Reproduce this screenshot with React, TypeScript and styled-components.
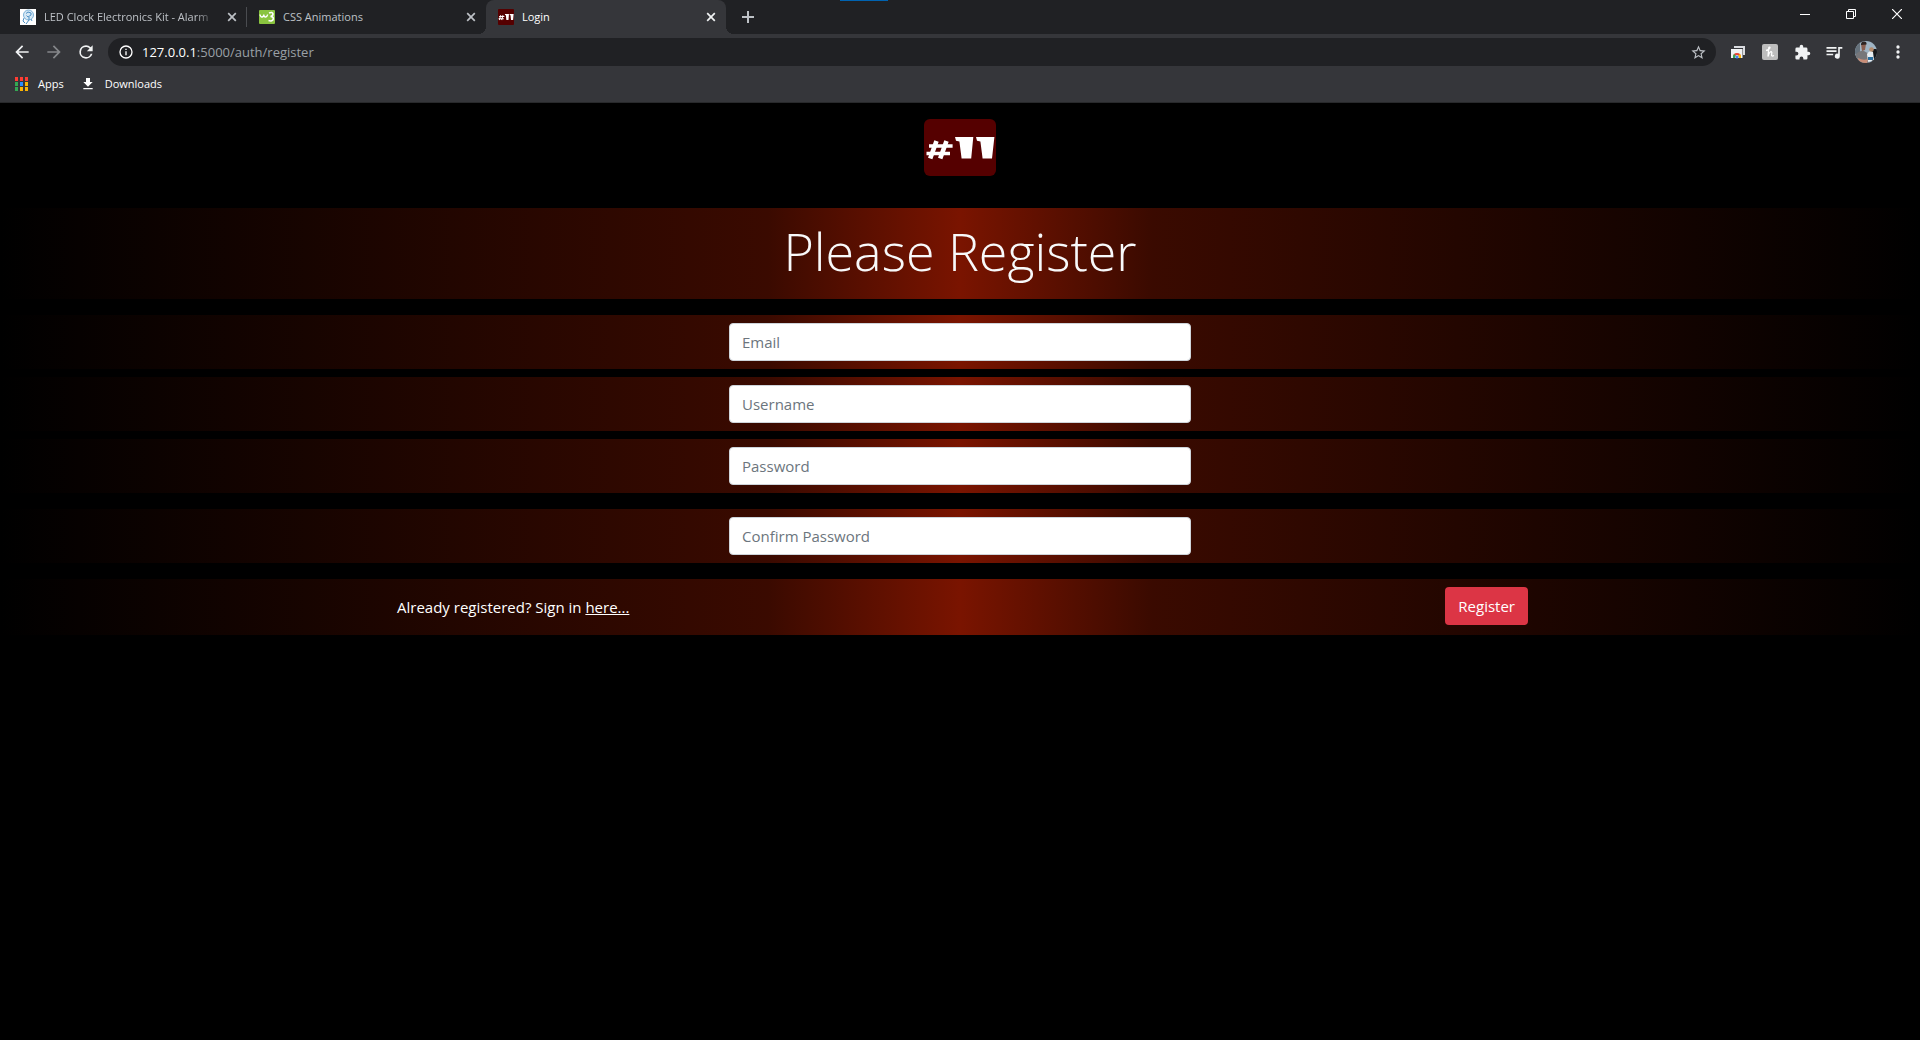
import React from "react";
import styled, { createGlobalStyle, css } from "styled-components";

const uiFont = `"Segoe UI", "Open Sans", "Noto Sans", sans-serif`;

const GlobalStyle = createGlobalStyle`
  *, *::before, *::after { box-sizing: border-box; }
  html, body { margin: 0; background: #000; }
  body { font-family: ${uiFont}; font-size: 15px; line-height: 24px; color: #fff; }
  button, input { font-family: inherit; }
`;

const Screen = styled.div`
  display: flex;
  flex-direction: column;
  min-height: 100vh;
  background: #000;
`;

/* ---------- browser chrome ---------- */

const Chrome = styled.header`
  background: #35363a;
  border-bottom: 1px solid #28292b;
  font-size: 11px;
  line-height: 16px;
`;

const TabStrip = styled.div`
  position: relative;
  display: flex;
  align-items: stretch;
  height: 34px;
  padding-left: 8px;
  background: #202124;
`;

const Accent = styled.span`
  position: absolute;
  top: 0;
  left: 840px;
  width: 48px;
  height: 1px;
  background: #0063b1;
`;

const Tab = styled.div<{ $active?: boolean; $divider?: boolean }>`
  position: relative;
  display: flex;
  align-items: center;
  gap: 8px;
  width: 239px;
  padding: 0 7px 0 12px;
  color: #bdc1c6;
  ${(p) =>
    p.$divider &&
    css`
      &::after {
        content: "";
        position: absolute;
        right: 0;
        top: 7px;
        width: 1px;
        height: 20px;
        background: #4a4c50;
      }
    `}
  ${(p) =>
    p.$active &&
    css`
      width: 240px;
      color: #fff;
      background: #35363a;
      border-radius: 8px 8px 0 0;
      &::before,
      &::after {
        content: "";
        position: absolute;
        bottom: 0;
        width: 8px;
        height: 8px;
      }
      &::before {
        left: -8px;
        background: radial-gradient(circle at 0 0, transparent 8px, #35363a 8px);
      }
      &::after {
        right: -8px;
        background: radial-gradient(circle at 100% 0, transparent 8px, #35363a 8px);
      }
    `}
`;

const TabTitle = styled.span<{ $fade?: boolean }>`
  flex: 1;
  min-width: 0;
  overflow: hidden;
  white-space: nowrap;
  ${(p) =>
    p.$fade &&
    css`
      mask-image: linear-gradient(90deg, #000 88%, transparent);
    `}
`;

const IconButton = styled.button<{ $w?: number; $h?: number; $color?: string }>`
  display: inline-flex;
  align-items: center;
  justify-content: center;
  flex: none;
  width: ${(p) => p.$w ?? 32}px;
  height: ${(p) => p.$h ?? 28}px;
  padding: 0;
  border: 0;
  background: none;
  color: ${(p) => p.$color ?? "#f1f3f4"};
  cursor: pointer;
`;

const NewTab = styled(IconButton)`
  margin: 3px 0 0 7px;
`;

const WindowControls = styled.div`
  display: flex;
  margin-left: auto;
`;

const Toolbar = styled.div`
  display: flex;
  align-items: center;
  height: 36px;
  padding: 0 6px;
`;

const AddressBar = styled.div`
  display: flex;
  align-items: center;
  flex: 1;
  height: 28px;
  margin: 0 6px;
  padding: 0 4px 0 10px;
  border-radius: 14px;
  background: #202124;
`;

const Address = styled.div`
  flex: 1;
  margin-left: 8px;
  font-size: 13px;
  line-height: 20px;
  color: #9aa0a6;

  b {
    font-weight: 400;
    color: #fff;
  }
`;

const Bookmarks = styled.nav`
  display: flex;
  align-items: center;
  gap: 16px;
  height: 32px;
  padding: 0 15px 4px;
`;

const Bookmark = styled.a`
  display: flex;
  align-items: center;
  gap: 9px;
  color: #fff;
  text-decoration: none;
`;

/* ---------- page ---------- */

const Page = styled.main`
  display: flex;
  flex-direction: column;
  align-items: center;
  padding-top: 16px;
`;

const LogoLink = styled.a`
  display: block;
  height: 57px;
  margin-bottom: 32px;
`;

const Form = styled.form`
  width: 100%;
`;

const Band = styled.div<{ $gap?: number }>`
  display: flex;
  justify-content: center;
  margin-bottom: ${(p) => p.$gap ?? 16}px;
  padding: 8px 0;
  background: linear-gradient(
    90deg,
    #000 0%,
    #3a0a00 40%,
    #7a1400 50%,
    #3a0a00 60%,
    #000 100%
  );
`;

const Title = styled.h1`
  margin: 0;
  padding-bottom: 5px;
  font-size: 52px;
  font-weight: 300;
  line-height: 70px;
  color: #f8f9fa;
`;

const Field = styled.div`
  width: calc(25% - 18px);
`;

const TextInput = styled.input`
  display: block;
  width: 100%;
  height: 38px;
  padding: 6px 12px;
  border: 1px solid #ced4da;
  border-radius: 4px;
  background: #fff;
  color: #495057;
  font-size: 15px;
  line-height: 24px;

  &::placeholder {
    color: #6c757d;
    opacity: 1;
  }
`;

const Actions = styled.div`
  display: flex;
  align-items: center;
  justify-content: space-between;
  width: 60%;
  height: 40px;
  padding: 0 8px 0 13px;
`;

const Prompt = styled.p`
  margin: 0;

  a {
    color: #fff;
    text-decoration: underline;
  }
`;

const Submit = styled.button`
  align-self: flex-start;
  height: 38px;
  padding: 0 13px;
  border: 0;
  border-radius: 4px;
  background: #dc3545;
  color: #fff;
  font-size: 15px;
  line-height: 24px;
  cursor: pointer;
`;

/* ---------- drawings ---------- */

const Badge = ({ w, h, r }: { w: number; h: number; r: number }) => (
  <svg width={w} height={h} viewBox="0 0 72 57" preserveAspectRatio="none" aria-hidden="true">
    <rect width="72" height="57" rx={r} fill="#550000" />
    <g stroke="#fff" strokeWidth="3.6" fill="none">
      <path d="M12.5 22 6.200 39.500M22.500 22 16.200 39.500" strokeWidth="4.600" />
      <path d="M5 27H28.600M2.500 34.500H26" />
    </g>
    <path fill="#fff" d="M31 18H49.300L47.200 39.500H37.600L35.400 22.600L32 21.800Z" />
    <path fill="#fff" d="M52 18H70.400L68 39.500H58.600L56.400 22.600L53 21.800Z" />
  </svg>
);

const CloseGlyph = () => (
  <svg width="10" height="10" viewBox="0 0 10 10" stroke="currentColor" strokeWidth="1.700" aria-hidden="true">
    <path d="M1.200 1.200 8.800 8.800M8.800 1.200 1.200 8.800" />
  </svg>
);

const ClockFavicon = () => (
  <svg width="16" height="16" viewBox="0 0 16 16" fill="none" aria-hidden="true">
    <rect width="16" height="16" fill="#fff" />
    <circle cx="8.500" cy="6" r="5" fill="#d5e8f5" stroke="#7db2d8" />
    <path d="M6 4.500 8 3l3 1v2L8 8 6.500 6.500M9 8v3l-3 4M4 9l-1 3 2 2M11 10l1 2" stroke="#4d8fc4" />
  </svg>
);

const W3Favicon = () => (
  <svg width="16" height="16" viewBox="0 0 16 16" fill="none" aria-hidden="true">
    <rect width="16" height="14" y="1" rx="1" fill="#8ac43f" />
    <path d="M1 5.500Q1.500 8.300 3.200 8 4.800 7.500 4.800 5.500 5 8.300 6.800 8 8.300 7.500 8.600 5.500" stroke="#fff" strokeWidth="1.400" />
    <path d="M10 4Q13.500 2.600 14 5 14 7 11.500 7.500 14.500 7.500 14.300 10 13.500 12.800 9.500 11.600" stroke="#fff" strokeWidth="1.600" />
  </svg>
);

const material = {
  back: "M20 11H7.83l5.59-5.59L12 4l-8 8 8 8 1.41-1.41L7.83 13H20v-2z",
  forward: "M12 4l-1.41 1.41L16.17 11H4v2h12.17l-5.58 5.59L12 20l8-8z",
  reload:
    "M17.650 6.350A7.960 7.960 0 0 0 12 4a8 8 0 1 0 7.730 10h-2.080A6 6 0 1 1 12 6c1.660 0 3.140.690 4.220 1.780L13 11h7V4l-2.350 2.350z",
  info: "M11 7h2v2h-2zm0 4h2v6h-2zm1-9a10 10 0 1 0 0 20 10 10 0 0 0 0-20zm0 18a8 8 0 1 1 0-16 8 8 0 0 1 0 16z",
  star: "M22 9.240l-7.190-.620L12 2 9.190 8.630 2 9.240l5.460 4.730L5.820 21 12 17.270 18.180 21l-1.630-7.030L22 9.240zM12 15.400l-3.760 2.270 1-4.280-3.320-2.880 4.380-.380L12 6.100l1.710 4.040 4.380.380-3.320 2.880 1 4.280L12 15.400z",
  puzzle:
    "M20.500 11H19V7a2 2 0 0 0-2-2h-4V3.500a2.500 2.500 0 0 0-5 0V5H4a2 2 0 0 0-2 2v3.800h1.500a2.700 2.700 0 0 1 0 5.400H2V20a2 2 0 0 0 2 2h3.800v-1.500a2.700 2.700 0 0 1 5.400 0V22H17a2 2 0 0 0 2-2v-4h1.500a2.500 2.500 0 0 0 0-5z",
  queue:
    "M15 6H3v2h12V6zm0 4H3v2h12v-2zM3 16h8v-2H3v2zM17 6v8.180A3 3 0 1 0 19 17V8h3V6h-5z",
  more: "M12 8a2 2 0 1 0 0-4 2 2 0 0 0 0 4zm0 2a2 2 0 1 0 0 4 2 2 0 0 0 0-4zm0 6a2 2 0 1 0 0 4 2 2 0 0 0 0-4z",
  download: "M19 9h-4V3H9v6H5l7 7 7-7zM5 18v2h14v-2H5z",
};

const Glyph = ({ name, size = 18 }: { name: keyof typeof material; size?: number }) => (
  <svg width={size} height={size} viewBox="0 0 24 24" fill="currentColor" aria-hidden="true">
    <path d={material[name]} />
  </svg>
);

const AppsGlyph = () => {
  const colors = ["#ff3d33", "#ff3d33", "#ff3d33", "#34a853", "#2b8cff", "#fbb404", "#34a853", "#fbb404", "#fbb404"];
  return (
    <svg width="14" height="14" viewBox="0 0 14 14" aria-hidden="true">
      {colors.map((c, i) => (
        <rect key={i} x={(i % 3) * 5} y={Math.floor(i / 3) * 5} width="3" height="4" fill={c} />
      ))}
    </svg>
  );
};

const CastGlyph = () => (
  <svg width="16" height="16" viewBox="0 0 16 16" aria-hidden="true">
    <path d="M4 2h11v9h-2V4H4z" fill="#dadce0" />
    <rect x="1" y="5" width="11.500" height="9" fill="#f1f3f4" />
    <path d="M3 13a4 4 0 0 1 8 0H9a2 2 0 0 0-4 0z" fill="#ea4335" />
    <path d="M3 13c0-1.300.5-2.200 1.200-2.900L5.600 11.600 5 14H3z" fill="#34a853" />
    <path d="M11 13c0-1.300-.5-2.200-1.200-2.900L8.400 11.600 9 14h2z" fill="#fbbc04" />
    <circle cx="7" cy="13" r="1.600" fill="#4285f4" />
  </svg>
);

const HoneyGlyph = () => (
  <svg width="16" height="16" viewBox="0 0 16 16" fill="none" aria-hidden="true">
    <rect width="16" height="16" rx="2" fill="#bdbdbd" />
    <path d="M4 6.500Q8 5.500 8 3.300 6.800 2.300 6.600 5L6 12.500Q7.500 7.500 9.300 7.600 10.300 8 9.600 10.500 9.300 13 12 11.500" stroke="#fff" strokeWidth="1.300" />
  </svg>
);

const Avatar = () => (
  <svg width="22" height="22" viewBox="0 0 22 22" aria-hidden="true">
    <defs>
      <clipPath id="face">
        <circle cx="11" cy="11" r="11" />
      </clipPath>
    </defs>
    <g clipPath="url(#face)">
      <rect width="22" height="22" fill="#9fb4c4" />
      <path d="M0 3 5 1v12H0z" fill="#66727c" />
      <path d="M17 8h5v12h-5z" fill="#16181b" />
      <path d="M1 22V13q4-4 8-3l5 3v9z" fill="#77777a" />
      <path d="M6 3q3-3 5 0l-1 6-3 1z" fill="#8a5f50" />
      <path d="M6 4q0-4 3-3.500 3 0 2.500 3z" fill="#2d2422" />
      <path d="M12 13q3-5 6-2l1 8-6 2z" fill="#e8eef2" />
      <path d="M13 16h5v3h-5z" fill="#2c6f9f" />
      <circle cx="16.500" cy="8.500" r="2.300" fill="#b58a6a" />
      <path d="M3 17q5 3 10 1l-1 4H4z" fill="#c98e78" />
    </g>
  </svg>
);

const fields = [
  { id: "email", type: "email", text: "Email", gap: 8 },
  { id: "username", type: "text", text: "Username", gap: 8 },
  { id: "password", type: "password", text: "Password", gap: 16 },
  { id: "confirm", type: "password", text: "Confirm Password", gap: 16 },
];

export default function App() {
  return (
    <Screen>
      <GlobalStyle />
      <Chrome>
        <TabStrip>
          <Accent />
          <Tab $divider>
            <ClockFavicon />
            <TabTitle $fade>LED Clock Electronics Kit - Alarm</TabTitle>
            <IconButton $w={16} $h={16} $color="#bdc1c6" aria-label="Close tab">
              <CloseGlyph />
            </IconButton>
          </Tab>
          <Tab>
            <W3Favicon />
            <TabTitle>CSS Animations</TabTitle>
            <IconButton $w={16} $h={16} $color="#bdc1c6" aria-label="Close tab">
              <CloseGlyph />
            </IconButton>
          </Tab>
          <Tab $active>
            <Badge w={16} h={16} r={4} />
            <TabTitle>Login</TabTitle>
            <IconButton $w={16} $h={16} aria-label="Close tab">
              <CloseGlyph />
            </IconButton>
          </Tab>
          <NewTab $w={30} $color="#bdc1c6" aria-label="New tab">
            <svg width="12" height="12" viewBox="0 0 12 12" stroke="currentColor" strokeWidth="2">
              <path d="M6 0v12M0 6h12" />
            </svg>
          </NewTab>
          <WindowControls>
            <IconButton $w={46} aria-label="Minimize">
              <svg width="10" height="10" viewBox="0 0 10 10" stroke="#fff">
                <path d="M0 5.500h10" />
              </svg>
            </IconButton>
            <IconButton $w={46} aria-label="Restore">
              <svg width="10" height="10" viewBox="0 0 10 10" stroke="#fff" fill="none">
                <path d="M.5 2.500h7v7h-7zM2.500 2.500v-2h7v7h-2" />
              </svg>
            </IconButton>
            <IconButton $w={46} aria-label="Close">
              <svg width="10" height="10" viewBox="0 0 10 10" stroke="#fff" strokeWidth="1.200">
                <path d="M0 0 10 10M10 0 0 10" />
              </svg>
            </IconButton>
          </WindowControls>
        </TabStrip>
        <Toolbar>
          <IconButton aria-label="Back">
            <Glyph name="back" size={20} />
          </IconButton>
          <IconButton $color="#85878a" aria-label="Forward">
            <Glyph name="forward" size={20} />
          </IconButton>
          <IconButton aria-label="Reload">
            <Glyph name="reload" size={20} />
          </IconButton>
          <AddressBar>
            <Glyph name="info" size={16} />
            <Address>
              <b>127.0.0.1</b>:5000/auth/register
            </Address>
            <IconButton $w={28} $color="#bdc1c6" aria-label="Bookmark this page">
              <Glyph name="star" size={17} />
            </IconButton>
          </AddressBar>
          <IconButton aria-label="Remote desktop">
            <CastGlyph />
          </IconButton>
          <IconButton aria-label="Honey">
            <HoneyGlyph />
          </IconButton>
          <IconButton aria-label="Extensions">
            <Glyph name="puzzle" size={17} />
          </IconButton>
          <IconButton aria-label="Media">
            <Glyph name="queue" size={20} />
          </IconButton>
          <IconButton aria-label="Profile">
            <Avatar />
          </IconButton>
          <IconButton aria-label="Menu">
            <Glyph name="more" size={20} />
          </IconButton>
        </Toolbar>
        <Bookmarks>
          <Bookmark href="#apps">
            <AppsGlyph />
            Apps
          </Bookmark>
          <Bookmark href="#downloads">
            <Glyph name="download" size={16} />
            Downloads
          </Bookmark>
        </Bookmarks>
      </Chrome>
      <Page>
        <LogoLink href="#home" aria-label="Home">
          <Badge w={72} h={57} r={6} />
        </LogoLink>
        <Form onSubmit={(e) => e.preventDefault()}>
          <Band>
            <Title>Please Register</Title>
          </Band>
          {fields.map((f) => (
            <Band key={f.id} $gap={f.gap}>
              <Field>
                <TextInput id={f.id} name={f.id} type={f.type} placeholder={f.text} aria-label={f.text} />
              </Field>
            </Band>
          ))}
          <Band>
            <Actions>
              <Prompt>
                Already registered? Sign in <a href="#login">here...</a>
              </Prompt>
              <Submit type="submit">Register</Submit>
            </Actions>
          </Band>
        </Form>
      </Page>
    </Screen>
  );
}
